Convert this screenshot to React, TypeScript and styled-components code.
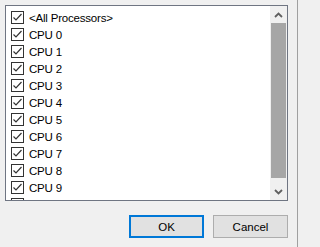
import styled, { createGlobalStyle } from 'styled-components'

type CheckRowProps = {
  label: string
}

const processors = [
  '<All Processors>',
  'CPU 0',
  'CPU 1',
  'CPU 2',
  'CPU 3',
  'CPU 4',
  'CPU 5',
  'CPU 6',
  'CPU 7',
  'CPU 8',
  'CPU 9',
  'CPU 10',
  'CPU 11',
]

export default function App() {
  return (
    <>
      <GlobalStyle />
      <StyledWindow>
        <StyledFrame>
          <StyledList>
            <StyledItems>
              {processors.map((name) => (
                <CheckRow key={name} label={name} />
              ))}
            </StyledItems>
            <StyledScrollbar>
              <StyledArrowButton>
                <Chevron up />
              </StyledArrowButton>
              <StyledTrack>
                <StyledThumb />
              </StyledTrack>
              <StyledArrowButton>
                <Chevron />
              </StyledArrowButton>
            </StyledScrollbar>
          </StyledList>
          <StyledButtonRow>
            <StyledButton $focused>OK</StyledButton>
            <StyledButton>Cancel</StyledButton>
          </StyledButtonRow>
        </StyledFrame>
      </StyledWindow>
    </>
  )
}

const CheckRow = ({ label }: CheckRowProps) => {
  return (
    <StyledRow>
      <StyledCheckbox>
        <svg width="11" height="11" viewBox="0 0 11 11">
          <path d="M1.5 5.5 L4 8 L9.5 2" fill="none" stroke="#333" strokeWidth="1.2" />
        </svg>
      </StyledCheckbox>
      <StyledLabel>{label}</StyledLabel>
    </StyledRow>
  )
}

const Chevron = ({ up }: { up?: boolean }) => {
  return (
    <svg width="9" height="6" viewBox="0 0 9 6">
      <path
        d={up ? 'M1 5 L4.5 1.5 L8 5' : 'M1 1 L4.5 4.5 L8 1'}
        fill="none"
        stroke="#606060"
        strokeWidth="1.8"
      />
    </svg>
  )
}

const GlobalStyle = createGlobalStyle`
  html, body {
    margin: 0;
    padding: 0;
    background: #f0f0f0;
  }
  body {
    font-family: "Liberation Sans", Arial, sans-serif;
  }
`

const StyledWindow = styled.div`
  width: 300px;
  height: 247px;
  background: #f0f0f0;
  display: flex;
  overflow: hidden;
`

const StyledFrame = styled.div`
  width: 298px;
  box-sizing: border-box;
  border-right: 1px solid #a0a0a0;
  padding: 5px 9px 0 5px;
  display: flex;
  flex-direction: column;
`

const StyledList = styled.div`
  height: 196px;
  box-sizing: border-box;
  border: 1px solid #6f7582;
  background: #fff;
  display: flex;
  overflow: hidden;
`

const StyledItems = styled.ul`
  flex: 1;
  margin: 0;
  padding: 3px 0 0 5px;
  list-style: none;
  overflow: hidden;
`

const StyledRow = styled.li`
  height: 17px;
  display: flex;
  align-items: center;
  gap: 5px;
`

const StyledCheckbox = styled.span`
  width: 13px;
  height: 13px;
  box-sizing: border-box;
  border: 1px solid #333;
  background: #fff;
  display: flex;
  align-items: center;
  justify-content: center;
  flex-shrink: 0;
`

const StyledLabel = styled.span`
  font-size: 11.5px;
  letter-spacing: -0.2px;
  color: #000;
  white-space: nowrap;
`

const StyledScrollbar = styled.div`
  width: 17px;
  background: #f0f0f0;
  display: flex;
  flex-direction: column;
`

const StyledArrowButton = styled.div`
  height: 17px;
  display: flex;
  align-items: center;
  justify-content: center;
  flex-shrink: 0;
`

const StyledTrack = styled.div`
  flex: 1;
  display: flex;
  flex-direction: column;
  padding: 0 1px;
`

const StyledThumb = styled.div`
  height: 155px;
  background: #a6a6a6;
`

const StyledButtonRow = styled.div`
  margin-top: 14px;
  display: flex;
  justify-content: flex-end;
  gap: 9px;
`

const StyledButton = styled.button<{ $focused?: boolean }>`
  width: 75px;
  height: 23px;
  box-sizing: border-box;
  padding: 0;
  background: #e1e1e1;
  border: ${({ $focused }) => ($focused ? '2px solid #0078d7' : '1px solid #adadad')};
  font-family: "Liberation Sans", Arial, sans-serif;
  font-size: 11.5px;
  color: #000;
`
